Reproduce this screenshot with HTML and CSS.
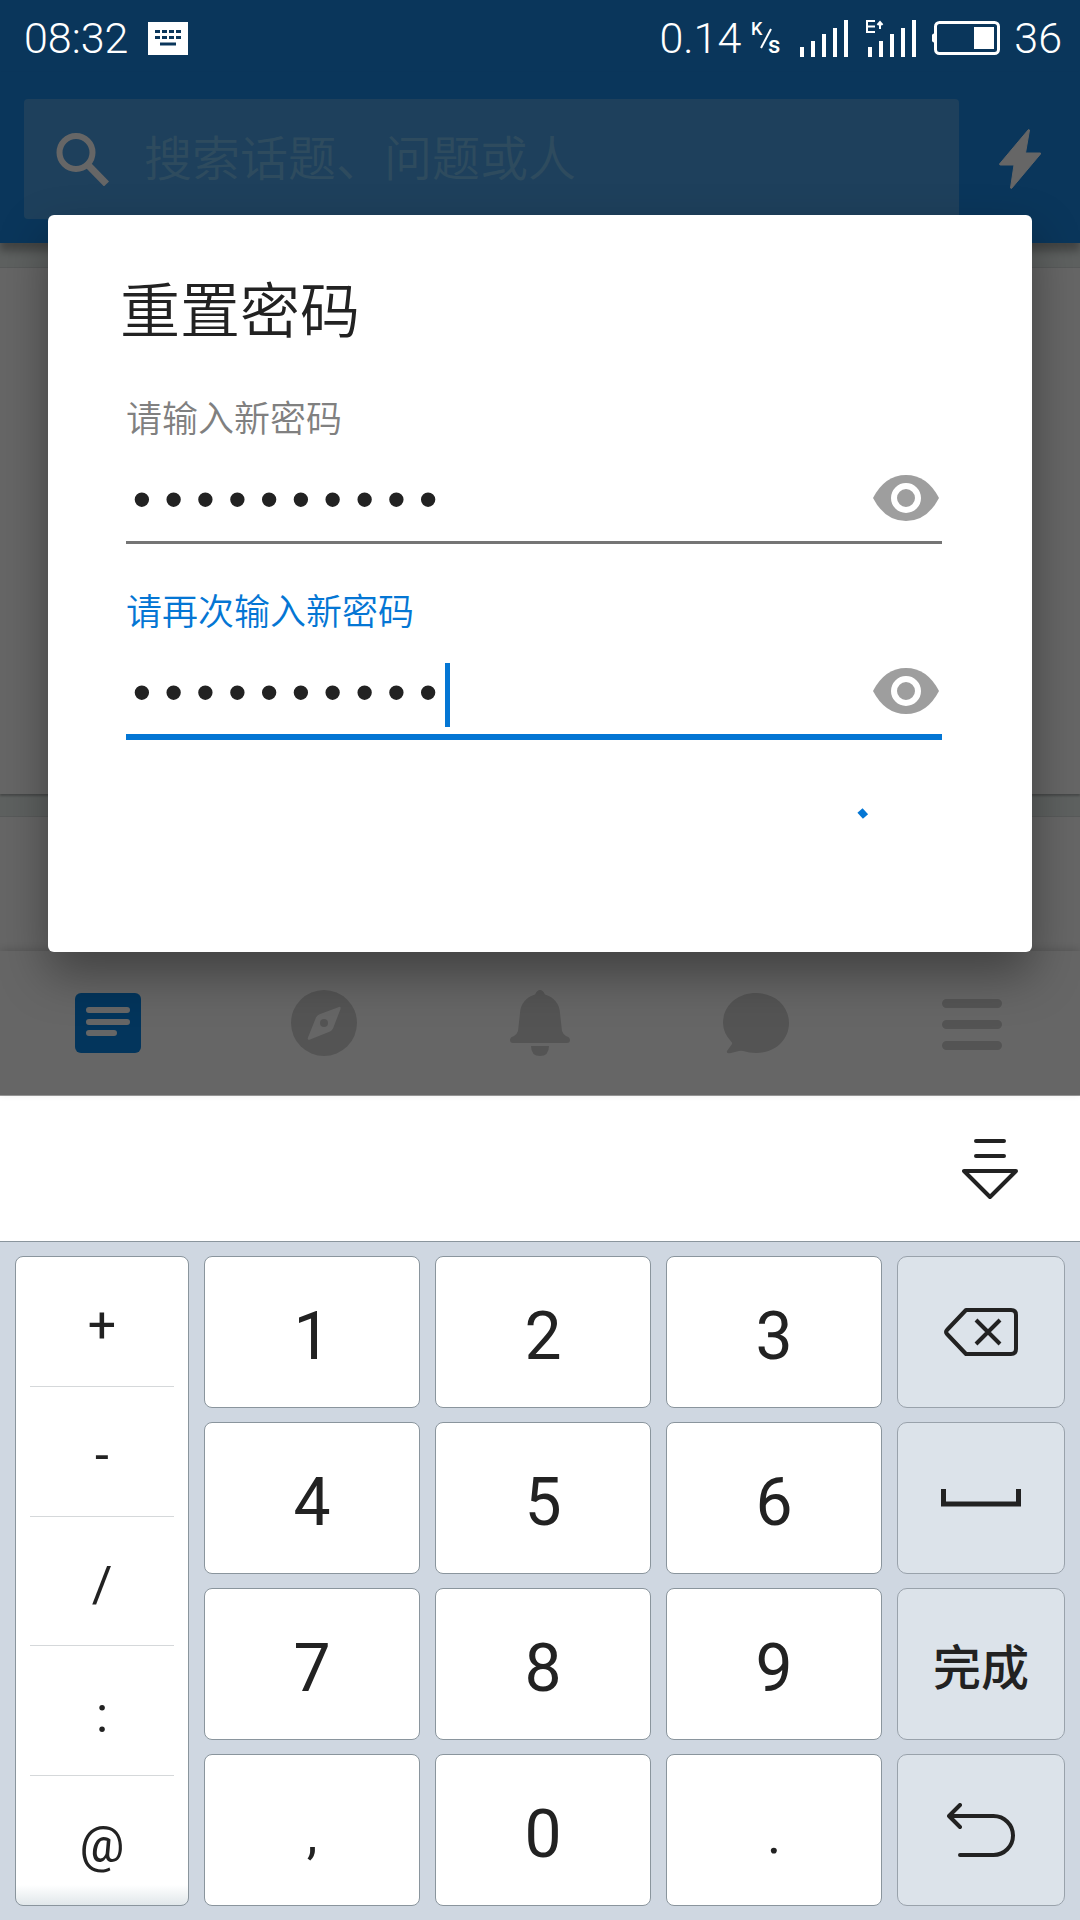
FILE: index.html
```html
<!DOCTYPE html>
<html lang="zh-CN">
<head>
<meta charset="utf-8">
<meta name="viewport" content="width=device-width, initial-scale=1">
<title>重置密码</title>
<link rel="stylesheet" href="styles.css">
</head>
<body>
<div class="screen">
  <div class="app">
    <div class="status">
      <span class="clock">08:32</span>
      <svg class="ime" width="40" height="33" viewBox="0 0 40 33" aria-hidden="true"><path fill="#fff" d="M0 0h40v33H0z"/><path stroke="#0a365b" stroke-width="3" fill="none" d="M7 9.500h26M7 15.500h26" stroke-dasharray="5 2"/><path fill="#0a365b" d="M12 20.500h16v3H12z"/></svg>
      <span class="speed">0.14</span>
      <svg class="unit" width="34" height="46" viewBox="-2 -6 34 46"><text x="0" y="14" font-size="18">K</text><text x="17" y="32" font-size="24">s</text><path d="M10 27L20 8" stroke="#fff" stroke-width="2"/></svg>
      <svg class="signal" width="49" height="37" viewBox="0 0 49 37" fill="#fff" aria-hidden="true"><path d="M0 27h4v10H0zM11 21h4v16h-4zM22 14h4v23h-4zM33 8h4v29h-4zM44 0h4v37h-4z"/></svg>
      <svg class="signal" width="51" height="37" viewBox="0 0 51 37" fill="#fff" aria-hidden="true"><path d="M2 27h4v10H2zM13 21h4v16h-4zM24 14h4v23h-4zM35 8h4v29h-4zM46 0h4v37h-4z"/><path d="M9 1H1v11h8M1 6.500h8M14 9V3M11.500 5L14 2l2.500 3" fill="none" stroke="#fff" stroke-width="2"/></svg>
      <svg class="battery" width="68" height="34" viewBox="0 0 68 34" aria-hidden="true"><rect x="3.500" y="1.500" width="63" height="31" rx="4" fill="none" stroke="#fff" stroke-width="3"/><path fill="#fff" d="M42 6h20v22H42zM0 14q0-1 3-2v10q-3-1-3-2z"/></svg>
      <span class="level">36</span>
    </div>
    <header class="header">
      <label class="search">
        <svg width="54" height="54" viewBox="0 0 54 54" fill="none" stroke="#fff" aria-hidden="true"><circle cx="20" cy="20.500" r="16.500" stroke-width="6"/><path d="M33 34L50.500 52" stroke-width="7"/></svg>
        <input class="search-input" type="search" placeholder="搜索话题、问题或人">
      </label>
      <button class="flash" aria-label="动态"><svg width="42" height="60" viewBox="0 0 42 60"><path fill="#fff" stroke="#fff" stroke-width="1" stroke-linejoin="round" d="M29.500.500L.500 35q0 1 1 1H15l-3.500 23 1 .5L41.500 25v-1H26.500L30.500 1z"/></svg></button>
    </header>
    <main class="feed">
      <div class="card card-tall"></div>
      <div class="card card-rest"></div>
    </main>
    <nav class="tabs">
      <a href="#home" aria-label="首页"><svg width="66" height="66" viewBox="0 0 66 66"><rect y="3" width="66" height="60" rx="6" fill="#0886e6"/><path d="M14 20h38M14 32h38M14 43h25" stroke="#fff" stroke-width="6" stroke-linecap="round"/></svg></a>
      <a href="#explore" aria-label="发现"><svg width="66" height="66" viewBox="0 0 66 66"><circle cx="33" cy="33" r="33" fill="#d2d2d2"/><path fill="#fff" d="M48 17q2-1 1.500 2L42 38.500q-1 2-3 3L19 49.500q-3 1-2-2L25 27.500q1-2 3-3z"/><circle cx="33" cy="33" r="4" fill="#d2d2d2"/></svg></a>
      <a href="#notice" aria-label="通知"><svg width="66" height="66" viewBox="0 0 66 66" fill="#d2d2d2"><path d="M33 0q3 0 5 4.500Q52 9 53 23l2 18q1 3 4 5 4 1 4 4 0 3-3 3H6q-3 0-3-3 0-3 4-4 3-2 4-5l2-18Q14 9 28 4.500 30 0 33 0zM24 56h18q0 10-9 10t-9-10z"/></svg></a>
      <a href="#message" aria-label="消息"><svg width="66" height="66" viewBox="0 0 66 66" fill="#d2d2d2"><path d="M33 3C52 3 66 16 66 33S52 63 33 63q-7 0-13-2-2-.500-4 0l-8 2q-5 1-4-2l5-7q.500-1-.500-2Q0 43 0 33C0 16 14 3 33 3z"/></svg></a>
      <a href="#more" aria-label="更多"><svg width="66" height="66" viewBox="0 0 66 66"><path d="M7.500 13.500h51M7.500 34.500h51M7.500 55.500h51" stroke="#d2d2d2" stroke-width="9" stroke-linecap="round"/></svg></a>
    </nav>
    <div class="scrim">
      <form class="dialog" role="dialog" aria-labelledby="dialog-title">
        <h1 class="title" id="dialog-title">重置密码</h1>
        <div class="field">
          <label class="label" for="pw">请输入新密码</label>
          <div class="row">
            <input class="password" id="pw" type="password" value="abcdefghij">
            <button class="eye" type="button" aria-label="显示密码"><svg width="66" height="46" viewBox="0 0 66 46"><path fill="#9e9e9e" d="M0 23Q12 0 33 0t33 23Q54 46 33 46T0 23z"/><circle cx="33" cy="23" r="12" fill="#9e9e9e" stroke="#fff" stroke-width="6"/></svg></button>
          </div>
        </div>
        <div class="field field-active">
          <label class="label" for="pw2">请再次输入新密码</label>
          <div class="row">
            <input class="password" id="pw2" type="password" value="abcdefghij">
            <span class="caret"></span>
            <button class="eye" type="button" aria-label="显示密码"><svg width="66" height="46" viewBox="0 0 66 46"><path fill="#9e9e9e" d="M0 23Q12 0 33 0t33 23Q54 46 33 46T0 23z"/><circle cx="33" cy="23" r="12" fill="#9e9e9e" stroke="#fff" stroke-width="6"/></svg></button>
          </div>
        </div>
        <div class="actions">
          <svg width="108" height="108" viewBox="0 0 108 108" role="img" aria-label="加载中"><path d="M26 23.500l5.500 6" stroke="#0476d4" stroke-width="7" fill="none"/></svg>
        </div>
      </form>
    </div>
  </div>

  <section class="keyboard">
    <div class="toolbar">
      <button class="hide" aria-label="收起键盘"><svg width="56" height="62" viewBox="0 0 56 62" fill="none" stroke="#222" stroke-width="4" stroke-linecap="round" stroke-linejoin="round"><path d="M14 3h28M14 18h28M2 33h52L28 59z"/></svg></button>
    </div>
    <div class="keys">
      <div class="symbols">
        <button>+</button>
        <button>-</button>
        <button>/</button>
        <button>:</button>
        <button>@</button>
      </div>
      <button class="key">1</button>
      <button class="key">2</button>
      <button class="key">3</button>
      <button class="key key-fn" aria-label="删除"><svg width="74" height="48" viewBox="0 0 74 48" fill="none" stroke="#222" stroke-width="4" stroke-linejoin="round"><path d="M22 2h45q5 0 5 5v34q0 5-5 5H22L3 26q-2-2 0-4z"/><path d="M32 12l24 24M56 12L32 36"/></svg></button>
      <button class="key">4</button>
      <button class="key">5</button>
      <button class="key">6</button>
      <button class="key key-fn" aria-label="空格"><svg width="80" height="18" viewBox="0 0 80 18" fill="none" stroke="#222" stroke-width="5"><path d="M2.500 0v15h75V0"/></svg></button>
      <button class="key">7</button>
      <button class="key">8</button>
      <button class="key">9</button>
      <button class="key key-fn">完成</button>
      <button class="key key-punct">,</button>
      <button class="key">0</button>
      <button class="key key-punct">.</button>
      <button class="key key-fn" aria-label="换行"><svg width="68" height="54" viewBox="0 0 68 54" fill="none" stroke="#222" stroke-width="4" stroke-linecap="round" stroke-linejoin="round"><path d="M13 2L2 13l11 11M2 13h44.500a19.500 19.500 0 0 1 0 39H13"/></svg></button>
    </div>
  </section>
</div>
</body>
</html>
```
FILE: styles.css
```css
* {
  box-sizing: border-box;
}

body {
  margin: 0;
  font-family: Roboto, "Noto Sans CJK SC", sans-serif;
  color: #222;
}

button {
  display: flex;
  align-items: center;
  justify-content: center;
  margin: 0;
  padding: 0;
  border: 0;
  background: none;
  color: inherit;
  font: inherit;
}

input {
  min-width: 0;
  padding: 0;
  border: 0;
  outline: 0;
  background: none;
}

svg {
  display: block;
  flex: none;
}

.screen {
  display: flex;
  flex-direction: column;
  min-height: 100vh;
}

/* App behind the dialog */

.app {
  position: relative;
  display: flex;
  flex: 1;
  flex-direction: column;
  border-bottom: 1px solid #999;
  background: #fff;
}

.status {
  display: flex;
  align-items: center;
  height: 72px;
  padding: 4px 18px 0 24px;
  background: #1a87e3;
  color: #fff;
  font-size: 43px;
  font-weight: 300;
}

.status > * {
  position: relative;
  z-index: 2;
}

.ime {
  margin-left: 20px;
}

.speed {
  margin-left: auto;
}

.unit {
  margin-left: 8px;
  fill: #fff;
  font-weight: 500;
}

.signal {
  margin-left: 17px;
}

.battery {
  margin-left: 15px;
}

.level {
  margin-left: 14px;
}

.header {
  position: relative;
  display: flex;
  padding: 27px 0 24px 24px;
  background: #1a87e3;
  box-shadow: 0 8px 8px rgba(0, 0, 0, 0.3);
}

.search {
  display: flex;
  flex: 1;
  align-items: center;
  gap: 34px;
  height: 120px;
  padding: 0 32px;
  border-radius: 4px;
  background: #4ba0e6;
}

.search-input {
  flex: 1;
  padding-bottom: 8px;
  color: #fff;
  font-family: "Noto Sans CJK SC", sans-serif;
  font-size: 48px;
  font-weight: 350;
}

.search-input::placeholder {
  color: #73bcec;
}

.flash {
  width: 121px;
}

.feed {
  display: flex;
  flex: 1;
  flex-direction: column;
  gap: 22px;
  padding-top: 24px;
  background: #ebf2f0;
}

.card {
  border-top: 1px solid #dce2e1;
  background: #fff;
}

.card-tall {
  height: 527px;
  box-shadow: 0 2px 2px rgba(0, 0, 0, 0.25);
}

.card-rest {
  flex: 1;
}

.tabs {
  position: relative;
  display: flex;
  height: 144px;
  background: #fff;
  box-shadow: 0 -2px 8px rgba(0, 0, 0, 0.15);
}

.tabs a {
  display: flex;
  flex: 1;
  align-items: center;
  justify-content: center;
}

/* Dialog */

.scrim {
  position: absolute;
  inset: 0;
  z-index: 1;
  display: flex;
  align-items: center;
  padding: 72px 48px 0;
  background: rgba(0, 0, 0, 0.6);
}

.dialog {
  flex: 1;
  padding: 56px 90px 48px 72px;
  border-radius: 6px;
  background: #fff;
  box-shadow: 0 22px 48px rgba(0, 0, 0, 0.36);
}

.title {
  margin: 0 0 41px;
  font-size: 60px;
  font-weight: 350;
  line-height: 84px;
}

.field {
  margin: 0 0 43px 6px;
}

.label {
  display: block;
  color: #808080;
  font-size: 36px;
  font-weight: 350;
  line-height: 48px;
}

.row {
  position: relative;
  display: flex;
  align-items: center;
  justify-content: space-between;
  height: 100px;
  padding: 10px 3px 0 0;
  border-bottom: 3px solid #757575;
}

.field + .field {
  margin-top: 45px;
}

.password {
  flex: 1;
  padding-top: 12px;
  color: #222;
  font-family: "Liberation Mono", monospace;
  font-size: 53px;
}

.field-active .label {
  color: #0476d4;
}

.field-active .row {
  height: 103px;
  border-bottom: 6px solid #0476d4;
}

.caret {
  position: absolute;
  top: 26px;
  left: 319px;
  width: 5px;
  height: 64px;
  background: #0476d4;
}

.actions {
  display: flex;
  justify-content: flex-end;
  padding: 4px 0 9px;
}

/* Keyboard */

.toolbar {
  display: flex;
  justify-content: flex-end;
  height: 146px;
  padding-right: 62px;
  border-bottom: 1px solid #8a959d;
  background: #fff;
}

.keys {
  display: grid;
  grid-template-columns: 174fr 216fr 216fr 216fr 168fr;
  grid-auto-rows: 152px;
  gap: 14px 15px;
  padding: 14px 15px;
  background: #cfd7e1;
}

.symbols,
.key {
  border: 1px solid #8a959d;
  border-radius: 8px;
  background: #fff;
}

.symbols {
  display: flex;
  grid-row: span 4;
  flex-direction: column;
  padding: 0 14px;
  background: linear-gradient(to top, #e1e7ea, #fff 20px);
}

.symbols button {
  flex: 1;
  padding-top: 8px;
  font-size: 50px;
}

.symbols button + button {
  border-top: 1px solid #d5d8da;
}

.key {
  padding-top: 8px;
  font-size: 66px;
}

.key-punct {
  font-size: 54px;
}

.key-fn {
  padding-top: 0;
  border-color: #99a2ab;
  border-radius: 10px;
  background: #dce3ea;
  font-size: 48px;
  font-weight: 500;
}
```
